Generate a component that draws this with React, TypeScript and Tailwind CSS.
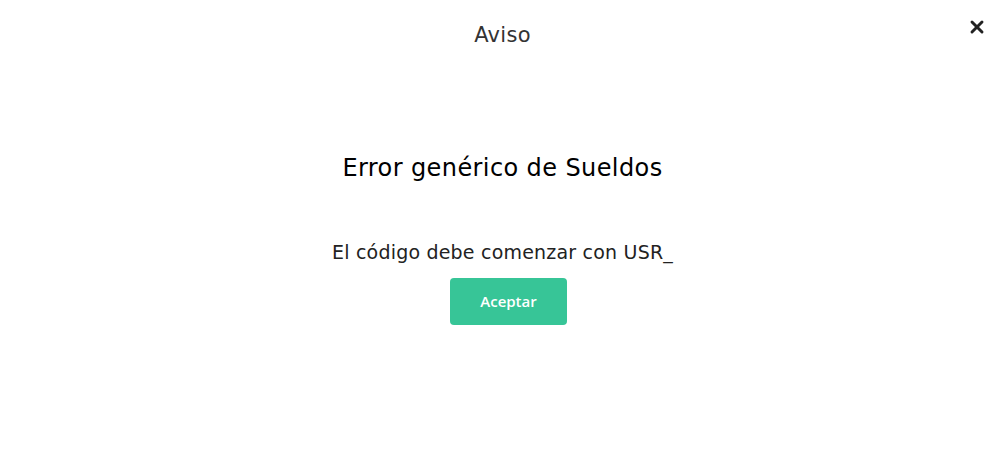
import { X } from 'lucide-react';

export default function App() {
  return (
    <div className="w-[1001px] h-[471px] bg-white relative font-['DejaVu_Sans',sans-serif] text-[#1a1a1a]">
      <header className="flex justify-center pt-[20px] pl-[4px]">
        <h2 className="text-[21px] text-[#333] tracking-[0.3px]">Aviso</h2>
      </header>
      <button className="absolute top-[17px] right-[14px] text-[#222]">
        <X className="h-[20px] w-[20px]" strokeWidth={3.5} />
      </button>

      <div className="flex flex-col items-center pl-[4px]">
        <h1 className="mt-[98px] text-[24px] font-medium text-black tracking-[0.4px]">Error genérico de Sueldos</h1>
        <p className="mt-[52px] text-[19px] text-[#222] tracking-[0.2px]">El código debe comenzar con USR_</p>
        <button className="mt-[12px] ml-[12px] w-[117px] h-[47px] rounded-[4px] bg-[#37c597] text-white text-[15px] font-semibold font-['Open_Sans',sans-serif]">
          Aceptar
        </button>
      </div>
    </div>
  );
}
